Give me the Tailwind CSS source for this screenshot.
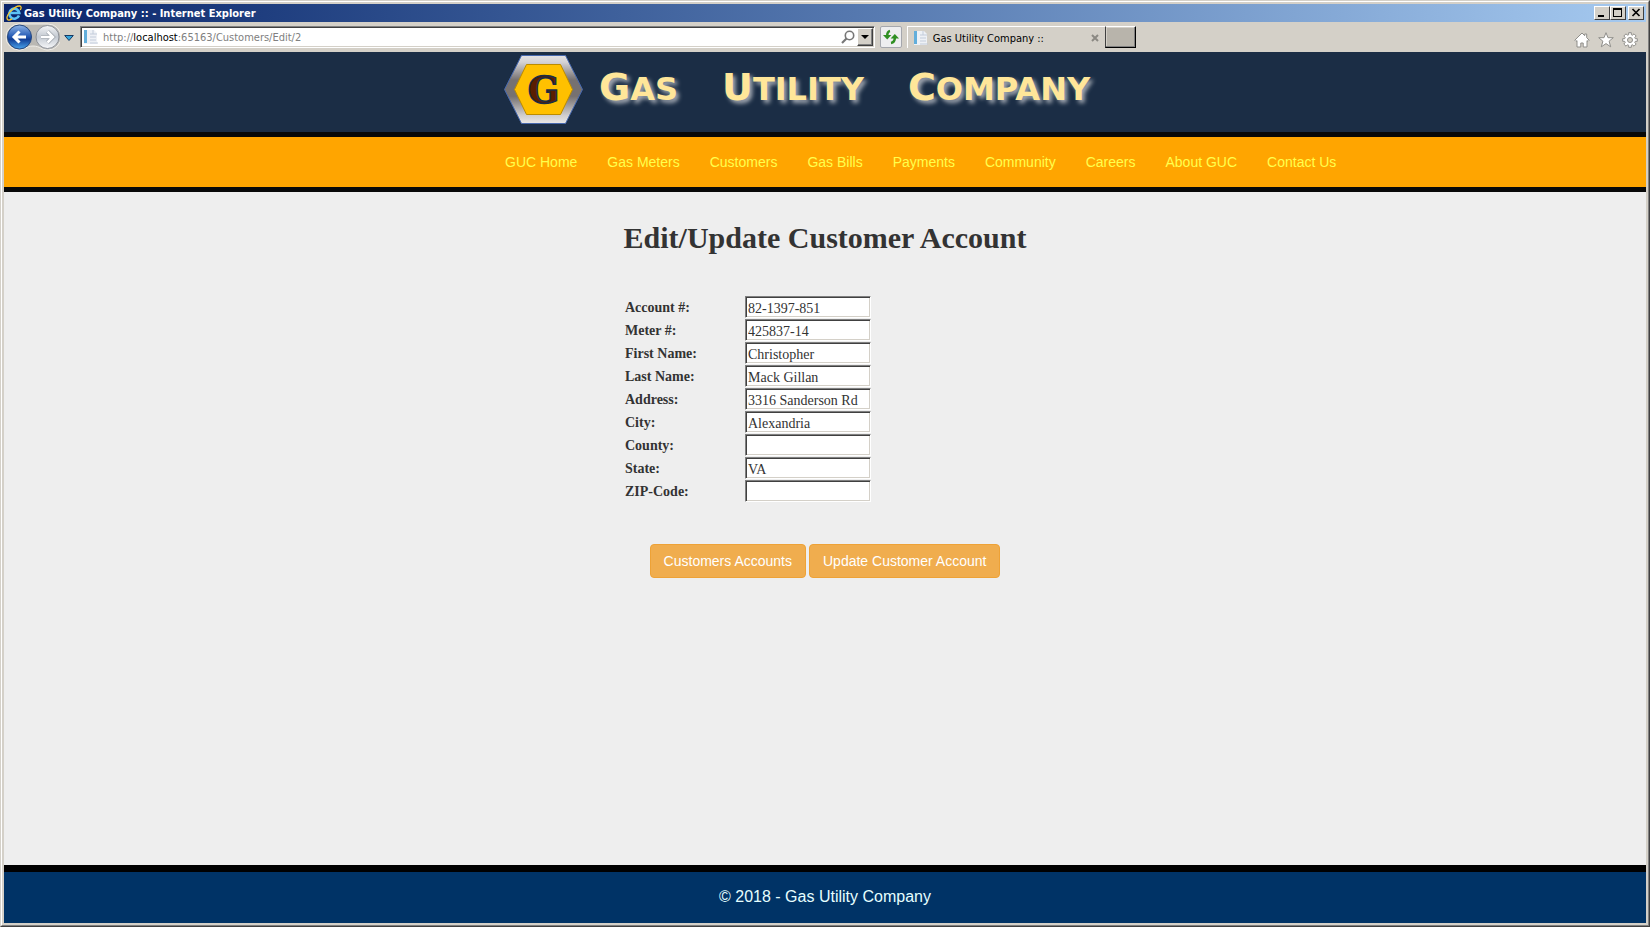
<!DOCTYPE html>
<html lang="en">
  <head>
    <meta charset="UTF-8" />
    <meta name="viewport" content="width=device-width, initial-scale=1.0" />
    <title>Gas Utility Company ::</title>
    <script src="https://cdn.jsdelivr.net/npm/@tailwindcss/browser@4"></script>
  </head>
  <body class="bg-[#d4d0c8] font-['Liberation_Sans',Arial,sans-serif]">
    <div class="min-h-screen flex flex-col border border-t-[#d4d0c8] border-l-[#d4d0c8] border-r-[#404040] border-b-[#404040]">
      <div class="grow flex flex-col border border-t-white border-l-white border-r-[#808080] border-b-[#808080] p-0.5">
        <!-- title bar -->
        <div class="flex items-center h-[18px] pl-0.5 pr-0.5 bg-linear-to-r from-[#0a246a] to-[#a6caf0] font-['DejaVu_Sans_Condensed','DejaVu_Sans',sans-serif]">
          <svg class="w-4 h-4 mr-0.5" viewBox="0 0 16 16" fill="none">
            <path d="M13 10.500A5 5 0 1 1 13.300 8H4.500" stroke="#5cc3f5" stroke-width="2.600" />
            <path d="M1.500 14.500C-1 11 8 1 13.500 1c2 0 2 2 .8 4M1.500 14.500c1 1 3 .3 4.500-.6" stroke="#f7c72d" stroke-width="1.300" />
          </svg>
          <span class="grow text-white text-[11px] font-bold leading-4 pt-0.5">Gas Utility Company :: - Internet Explorer</span>
          <div class="flex">
            <button aria-label="Minimize" class="w-4 h-3.5 bg-[#d4d0c8] border border-t-white border-l-white border-r-[#404040] border-b-[#404040]">
              <svg class="w-3.5 h-3" viewBox="0 0 14 12"><path d="M3 8h6v2H3z" /></svg>
            </button>
            <button aria-label="Maximize" class="w-4 h-3.5 bg-[#d4d0c8] border border-t-white border-l-white border-r-[#404040] border-b-[#404040]">
              <svg class="w-3.5 h-3" viewBox="0 0 14 12"><path d="M2 1h9v9H2zM3 3v6h7V3z" fill-rule="evenodd" /></svg>
            </button>
            <button aria-label="Close" class="w-4 h-3.5 ml-0.5 bg-[#d4d0c8] border border-t-white border-l-white border-r-[#404040] border-b-[#404040]">
              <svg class="w-3.5 h-3" viewBox="0 0 14 12"><path d="M3.500 2l7 7M10.500 2l-7 7" stroke="#000" stroke-width="1.700" /></svg>
            </button>
          </div>
        </div>

        <!-- toolbar -->
        <div class="flex items-center h-[30px] pl-0.5 pr-2 text-[11px] font-['DejaVu_Sans_Condensed','DejaVu_Sans',sans-serif]">
          <svg class="w-[54px] h-7 shrink-0" viewBox="0 0 54 28">
            <defs>
              <linearGradient id="back" x2="0" y2="1">
                <stop offset="0" stop-color="#8fb4e6" />
                <stop offset=".45" stop-color="#2a5fb8" />
                <stop offset=".6" stop-color="#123f96" />
                <stop offset="1" stop-color="#4aa5ee" />
              </linearGradient>
              <linearGradient id="fwd" x2="0" y2="1">
                <stop offset="0" stop-color="#f4f5f6" />
                <stop offset=".5" stop-color="#c3c9d1" />
                <stop offset="1" stop-color="#f7f8fa" />
              </linearGradient>
            </defs>
            <path d="M13 1h29a13 13 0 0 1 0 26c-6 0-8-4-15-4s-8 4-14 4a13 13 0 0 1 0-26z" fill="#bab8b3" stroke="#f1efea" />
            <circle cx="13.500" cy="14" r="12" fill="url(#back)" stroke="#24477f" />
            <circle cx="41.500" cy="14" r="11.500" fill="url(#fwd)" stroke="#8c9097" />
            <path d="M20 14H8M13.500 8.500L8 14l5.500 5.500" fill="none" stroke="#fff" stroke-width="3" />
            <path d="M35 14h12M41.500 8.500L47 14l-5.500 5.500" fill="none" stroke="#9da3ab" stroke-width="4" />
            <path d="M35 14h12M41.500 8.500L47 14l-5.500 5.500" fill="none" stroke="#fff" stroke-width="2.500" />
          </svg>
          <svg class="w-2.5 h-2 mx-1 mt-0.5 shrink-0" viewBox="0 0 10 8"><path d="M.7 1.500h8.600L5 6.500z" fill="#35a5dc" stroke="#173a63" /></svg>
          <div class="flex items-center w-[48.7%] h-[22px] ml-0.5 pl-0.5 bg-white border border-t-[#808080] border-l-[#808080] border-r-white border-b-white shadow-[inset_1px_1px_#404040,inset_-1px_-1px_#d4d0c8]">
            <svg class="w-4 h-4 mr-1 shrink-0" viewBox="0 0 16 16">
              <path d="M1 1h10l3 3v11H1z" fill="#eef1f6" />
              <path d="M1 1h3v13H1z" fill="#62aedb" />
              <path d="M10 1v4h4M7 5h3M7 8h6M7 11h6M7 14h8" stroke="#c3ccda" fill="none" />
            </svg>
            <a href="#" class="grow pt-0.5 text-[#808080] leading-4">http://<span class="text-black">localhost</span>:65163/Customers/Edit/2</a>
            <svg class="w-3.5 h-3.5 mr-0.5 shrink-0" viewBox="0 0 14 14" fill="none" stroke="#777"><circle cx="8.500" cy="5.500" r="4.200" stroke-width="1.600" /><path d="M5.500 8.500L1 13" stroke-width="2.200" /></svg>
            <button aria-label="Address history" class="grid place-items-center w-4 h-[18px] mr-px bg-[#d4d0c8] border border-t-white border-l-white border-r-[#404040] border-b-[#404040] shadow-[inset_-1px_-1px_#808080]">
              <svg class="w-2 h-1" viewBox="0 0 8 4"><path d="M0 0h8L4 4z" /></svg>
            </button>
          </div>
          <button aria-label="Refresh" class="grid place-items-center w-[22px] h-[22px] ml-[5px] rounded-xs bg-[#eeeef0] border border-[#a5a7ad] shrink-0">
            <svg class="w-4 h-4" viewBox="0 0 16 16" fill="none" stroke="#2f8f22" stroke-width="2.500">
              <path d="M7 2C4.500 2.500 4.200 4 4.200 7" /><path d="M0 6h8.400L4.200 10.500z" fill="#2f8f22" stroke="none" />
              <path d="M8 14c3-.5 3.800-2 3.800-5" /><path d="M7.600 9.500H16L11.800 5z" fill="#2f8f22" stroke="none" />
            </svg>
          </button>
          <div class="flex items-center w-[198px] h-[22px] ml-[5px] pl-[5px] pr-1.5 border-t border-l border-white shrink-0">
            <svg class="w-4 h-4 mr-1 shrink-0" viewBox="0 0 16 16">
              <path d="M1 1h10l3 3v11H1z" fill="#eef1f6" />
              <path d="M1 1h3v13H1z" fill="#62aedb" />
              <path d="M10 1v4h4M7 5h3M7 8h6M7 11h6M7 14h8" stroke="#c3ccda" fill="none" />
            </svg>
            <span class="grow pt-0.5 text-black leading-4">Gas Utility Company ::</span>
            <button aria-label="Close tab"><svg class="w-2 h-2" viewBox="0 0 8 8"><path d="M1 1l6 6M7 1L1 7" stroke="#8b8983" stroke-width="2" /></svg></button>
          </div>
          <button aria-label="New tab" class="w-[31px] h-[22px] bg-[#b8b4ab] border border-t-white border-l-[#404040] border-r-black border-b-black shadow-[inset_-1px_-1px_#808080,inset_1px_1px_#d4d0c8] shrink-0"></button>
          <div class="flex gap-2 ml-auto mt-1.5">
            <button aria-label="Home"><svg class="w-4 h-4" viewBox="0 0 16 16"><path d="M8 1L.8 8.200l1.200 1.200 1-.8V15h3.800v-4h2.400v4H13V8.600l1 .8 1.200-1.200-2.500-2.500V2h-2v1.700z" fill="#fff" stroke="#8f8e8a" /></svg></button>
            <button aria-label="Favorites"><svg class="w-4 h-4" viewBox="0 0 16 16"><path d="M8 .7l2 5h5.300l-4.200 3.500 1.600 5.600L8 11.600l-4.700 3.200 1.600-5.600L.7 5.700H6z" fill="#fff" stroke="#8f8e8a" /></svg></button>
            <button aria-label="Tools"><svg class="w-4 h-4" viewBox="0 0 16 16">
              <path d="M6.700.7h2.600v2l1.300.5L12 1.800 14.200 4l-1.400 1.400.5 1.300h2v2.600h-2l-.5 1.300 1.400 1.400-2.200 2.200-1.400-1.400-1.300.5v2H6.700v-2l-1.300-.5L4 14.200 1.800 12l1.400-1.400-.5-1.300h-2V6.700h2l.5-1.300L1.800 4 4 1.800l1.400 1.400 1.300-.5z" fill="#fff" stroke="#8f8e8a" />
              <circle cx="8" cy="8" r="2.500" fill="#d4d0c8" stroke="#8f8e8a" />
            </svg></button>
          </div>
        </div>

        <!-- page -->
        <header class="bg-[#1b2d45] h-[85px] border-b-[5px] border-[#080808]">
          <div class="flex w-[642px] mx-auto pt-[3px]">
            <svg class="w-[79px] h-[69px] shrink-0" viewBox="0 0 79 69">
              <defs>
                <linearGradient id="steel" x2="0" y2="1">
                  <stop offset="0" stop-color="#e4e2e4" />
                  <stop offset=".1" stop-color="#d4d2d4" />
                  <stop offset=".36" stop-color="#767171" />
                  <stop offset=".6" stop-color="#767171" />
                  <stop offset=".88" stop-color="#d0cece" />
                  <stop offset="1" stop-color="#e9e7e7" />
                </linearGradient>
              </defs>
              <path d="M17.500.5h44l17 34-17 34h-44L.5 34.500z" fill="url(#steel)" stroke="#4668ae" />
              <path d="M22.500 9.500h34l12 25-12 25h-34l-12-25z" fill="#ffc000" stroke="#bc8c00" />
              <text x="39.500" y="48" text-anchor="middle" font-family="DejaVu Serif, serif" font-weight="700" font-size="37" fill="#5a1e00" stroke="#1b2d45" stroke-width="1.500">G</text>
            </svg>
            <h1 class="flex gap-11 pl-4 text-[#ffe699] text-[32px] leading-[64px] font-bold whitespace-nowrap font-['DejaVu_Sans',Verdana,sans-serif] [text-shadow:3px_3px_4px_#a5abb4]">
              <span><span class="text-[38px]">G</span>AS</span>
              <span><span class="text-[38px]">U</span>TILITY</span>
              <span><span class="text-[38px]">C</span>OMPANY</span>
            </h1>
          </div>
        </header>
        <nav class="bg-[orange] h-[55px] border-b-[5px] border-[#080808]">
          <div class="flex gap-[30px] w-[642px] mx-auto pl-px text-sm leading-[50px] text-[#ffff4d] whitespace-nowrap">
            <a href="#">GUC Home</a>
            <a href="#">Gas Meters</a>
            <a href="#">Customers</a>
            <a href="#">Gas Bills</a>
            <a href="#">Payments</a>
            <a href="#">Community</a>
            <a href="#">Careers</a>
            <a href="#">About GUC</a>
            <a href="#">Contact Us</a>
          </div>
        </nav>
        <main class="grow bg-[#eee] text-[#333] pt-7">
          <h2 class="text-center text-[30px] leading-9 font-bold font-['Liberation_Serif',serif]">Edit/Update Customer Account</h2>
          <form>
            <div class="w-[410px] mx-auto pt-10 pl-[5px] font-['Liberation_Serif',serif] text-sm">
              <div class="grid grid-cols-[120px_126px] gap-y-px items-center">
                <label for="account" class="pt-0.5 font-bold">Account #:</label>
                <input id="account" value="82-1397-851" class="h-[22px] px-0.5 pt-1 bg-white border border-t-[#808080] border-l-[#808080] border-r-white border-b-white shadow-[inset_1px_1px_#404040,inset_-1px_-1px_#d4d0c8]" />
                <label for="meter" class="pt-0.5 font-bold">Meter #:</label>
                <input id="meter" value="425837-14" class="h-[22px] px-0.5 pt-1 bg-white border border-t-[#808080] border-l-[#808080] border-r-white border-b-white shadow-[inset_1px_1px_#404040,inset_-1px_-1px_#d4d0c8]" />
                <label for="first" class="pt-0.5 font-bold">First Name:</label>
                <input id="first" value="Christopher" class="h-[22px] px-0.5 pt-1 bg-white border border-t-[#808080] border-l-[#808080] border-r-white border-b-white shadow-[inset_1px_1px_#404040,inset_-1px_-1px_#d4d0c8]" />
                <label for="last" class="pt-0.5 font-bold">Last Name:</label>
                <input id="last" value="Mack Gillan" class="h-[22px] px-0.5 pt-1 bg-white border border-t-[#808080] border-l-[#808080] border-r-white border-b-white shadow-[inset_1px_1px_#404040,inset_-1px_-1px_#d4d0c8]" />
                <label for="address" class="pt-0.5 font-bold">Address:</label>
                <input id="address" value="3316 Sanderson Rd" class="h-[22px] px-0.5 pt-1 bg-white border border-t-[#808080] border-l-[#808080] border-r-white border-b-white shadow-[inset_1px_1px_#404040,inset_-1px_-1px_#d4d0c8]" />
                <label for="city" class="pt-0.5 font-bold">City:</label>
                <input id="city" value="Alexandria" class="h-[22px] px-0.5 pt-1 bg-white border border-t-[#808080] border-l-[#808080] border-r-white border-b-white shadow-[inset_1px_1px_#404040,inset_-1px_-1px_#d4d0c8]" />
                <label for="county" class="pt-0.5 font-bold">County:</label>
                <input id="county" value="" class="h-[22px] px-0.5 pt-1 bg-white border border-t-[#808080] border-l-[#808080] border-r-white border-b-white shadow-[inset_1px_1px_#404040,inset_-1px_-1px_#d4d0c8]" />
                <label for="state" class="pt-0.5 font-bold">State:</label>
                <input id="state" value="VA" class="h-[22px] px-0.5 pt-1 bg-white border border-t-[#808080] border-l-[#808080] border-r-white border-b-white shadow-[inset_1px_1px_#404040,inset_-1px_-1px_#d4d0c8]" />
                <label for="zip" class="pt-0.5 font-bold">ZIP-Code:</label>
                <input id="zip" value="" class="h-[22px] px-0.5 pt-1 bg-white border border-t-[#808080] border-l-[#808080] border-r-white border-b-white shadow-[inset_1px_1px_#404040,inset_-1px_-1px_#d4d0c8]" />
              </div>
            </div>
            <div class="flex justify-center gap-[3px] pt-[42px] text-sm text-white">
              <button type="button" class="h-[34px] px-[13px] rounded-sm bg-[#f0ad4e] border border-[#eea236]">Customers Accounts</button>
              <button type="button" class="h-[34px] px-[13px] rounded-sm bg-[#f0ad4e] border border-[#eea236]">Update Customer Account</button>
            </div>
          </form>
        </main>
        <footer class="h-[58px] bg-[#003366] border-t-[7px] border-black text-center text-base leading-[50px] text-[#e6ffff]">&copy; 2018 - Gas Utility Company</footer>
      </div>
    </div>
  </body>
</html>
